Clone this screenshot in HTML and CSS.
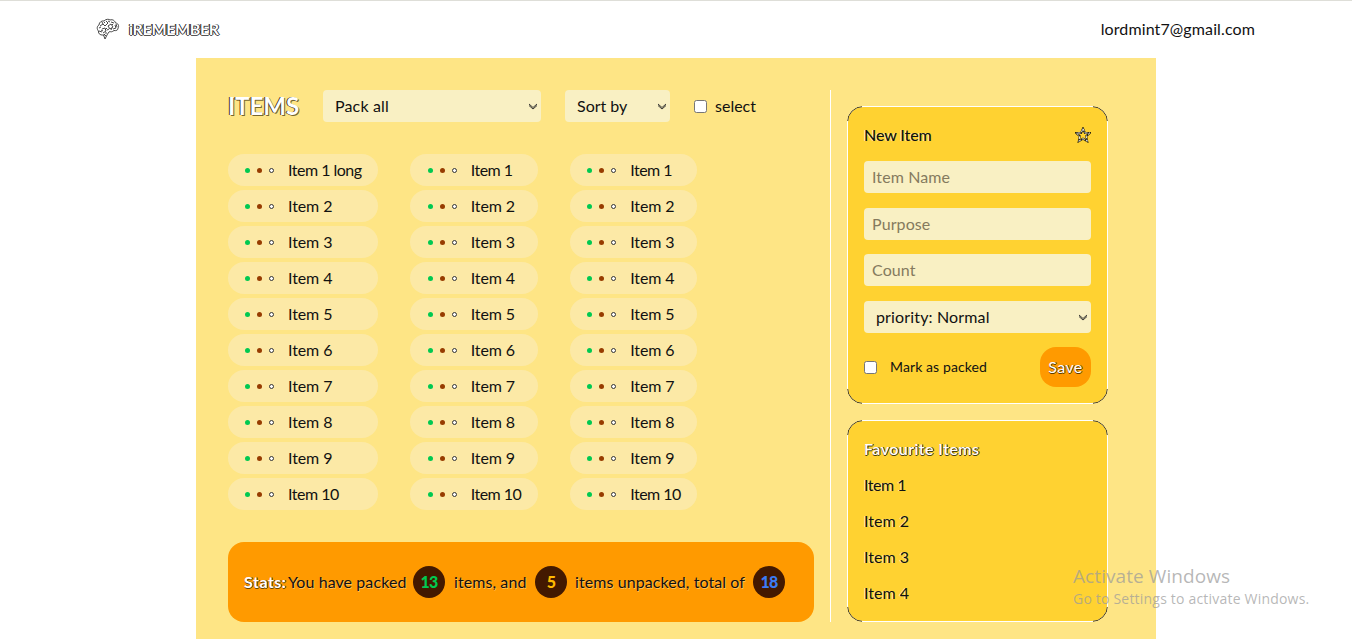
FILE: index.html
```html
<!DOCTYPE html>
<html lang="en">
<head>
<meta charset="utf-8">
<title>iRemember</title>
<link rel="stylesheet" href="styles.css">
</head>
<body>
<header class="topbar">
  <div class="brand">
    <svg class="brain" viewBox="0 0 24 22" fill="none" stroke="#333" stroke-width=".9">
      <path d="M9 16.500C5 18 2 16 2.500 13C.5 11 1 8 3 7C3 4 6 2.500 8 3C10 .8 13 1 14 2C17 1 19 3 19.500 5C22 5 23.500 8 22 10C22.500 12 20 13 18 12.500C16 14 15 14 14 13.500C12 14 12 16 11 17L9 21L7.500 17"/>
      <path d="M4 8L7 6L9 8L12 5L10 3M6 11L9 10L10 13L7 15M3 13L6 14M12 8L15 6L17 9L14 11L12 8M15 4L18 5M19 7L20 10L17 11M11 12L13 11M9 15L11 15M6 4L7 6M3 10L5 9M9 5L8 4M12 3L14 4M17 7L16 6M5 12L7 13M9 12L11 10M8 16L10 18M20 6L21 9M15 12L16 10"/>
    </svg>
    <span class="brand-name">iREMEMBER</span>
  </div>
  <span class="email">lordmint7@gmail.com</span>
</header>
<main class="board">
  <section class="left">
    <div class="tools">
      <h1 class="title">ITEMS</h1>
      <div class="select pack"><span>Pack all</span><svg class="chev" viewBox="0 0 10 7"><path d="M1 1L5 4.500L9 1M1 2.500L5 6L9 2.500"/></svg></div>
      <div class="select sort"><span>Sort by</span><svg class="chev" viewBox="0 0 10 7"><path d="M1 1L5 4.500L9 1M1 2.500L5 6L9 2.500"/></svg></div>
      <label class="check"><input type="checkbox" class="box"><span>select</span></label>
    </div>
    <div class="lists" id="lists"></div>
    <div class="stats">
      <b class="stats-label">Stats:</b><span class="s1">You have packed</span><span class="num green">13</span><span class="s2">items, and</span><span class="num amber">5</span><span class="s3">items unpacked, total of</span><span class="num blue">18</span>
    </div>
  </section>
  <div class="divider"></div>
  <aside class="right">
    <form class="card form">
      <div class="card-head"><span class="new">New Item</span>
        <svg class="star" viewBox="0 0 16 16"><path class="star-dark" d="M8 1.500L9.900 6H14.700L11.200 9.200L12.200 14.200L8 11.600L3.800 14.200L4.800 9.200L1.300 6H6.100Z"/><path class="star-light" d="M8 1.500L9.900 6H14.700L11.200 9.200L12.200 14.200L8 11.600L3.800 14.200L4.800 9.200L1.300 6H6.100Z"/></svg>
      </div>
      <input class="field" placeholder="Item Name">
      <input class="field" placeholder="Purpose">
      <input class="field" placeholder="Count">
      <div class="select priority"><span>priority: Normal</span><svg class="chev" viewBox="0 0 10 7"><path d="M1 1L5 4.500L9 1M1 2.500L5 6L9 2.500"/></svg></div>
      <div class="actions">
        <label class="check mark"><input type="checkbox" class="box"><span>Mark as packed</span></label>
        <button type="button" class="save">Save</button>
      </div>
    </form>
    <section class="card favs">
      <h2 class="fav-title">Favourite Items</h2>
      <span class="one">Item 1</span><span>Item 2</span><span>Item 3</span><span>Item 4</span>
    </section>
  </aside>
</main>
<div class="watermark"><div class="wm-title">Activate Windows</div><div class="wm-text">Go to Settings to activate Windows.</div></div>
<script src="script.js"></script>
</body>
</html>
```
FILE: styles.css
```css
* { box-sizing: border-box; }
body {
  margin: 0;
  height: 639px;
  overflow: hidden;
  background: #fff;
  color: #111;
  font: 16px/24px Lato, "Open Sans", sans-serif;
}
.topbar {
  height: 58px;
  border-top: 1px solid #deded8;
  padding: 0 97px 1px 96px;
  display: flex;
  justify-content: space-between;
  align-items: center;
}
.brand { display: flex; align-items: center; gap: 9px; }
.brain { width: 24px; height: 22px; }
.brand-name { color: #fff; font-weight: 700; letter-spacing: -.35px; text-shadow: -1px 0 #2c2018, 1px 0 #1d2d3b, 0 1px #555; }
.email { letter-spacing: .12px; }
.board {
  width: 960px;
  height: 581px;
  margin: 0 auto;
  padding: 32px 48px 17px 32px;
  background: #fee585;
  display: flex;
  gap: 16px;
}
.left { width: 586px; }
.tools { display: flex; height: 32px; align-items: center; }
.title {
  width: 95px;
  margin: 0;
  font-size: 24px;
  line-height: 32px;
  font-weight: 700;
  color: #fff;
  text-shadow: -1px 0 #3d3012, 1px 1px #77672f;
}
.select {
  height: 32px;
  padding: 0 3px 0 12px;
  border-radius: 4px;
  background: #f9f0c3;
  display: flex;
  align-items: center;
  justify-content: space-between;
}
.pack { width: 218px; margin-right: 24px; letter-spacing: .15px; }
.sort { width: 105px; margin-right: 24px; }
.chev { width: 10px; height: 7px; fill: none; stroke: #222; stroke-width: .9; }
.check { display: flex; align-items: center; gap: 8px; }
.box {
  appearance: none;
  width: 13px;
  height: 13px;
  margin: 0;
  border: 1px solid #767676;
  border-radius: 2.5px;
  background: #fff;
}
.lists { display: flex; gap: 32px; margin-top: 32px; }
.column { display: flex; flex-direction: column; gap: 4px; width: 127.500px; }
.column.wide { width: 150px; }
.pill {
  height: 32px;
  padding-left: 17px;
  border-radius: 16px;
  background: #fce9a6;
  display: flex;
  align-items: center;
  white-space: nowrap;
  letter-spacing: -.1px;
}
.column:not(.wide) .pill { padding-left: 17.700px; }
.pill.one, .pill.ten, .one { letter-spacing: -.5px; }
.dot { width: 5px; height: 5px; border-radius: 50%; margin-right: 7px; }
.dot-green { background: #00c951; }
.dot-red { background: #973c00; }
.dot-white { background: #fff; border: 1px solid #333; margin-right: 14px; }
.stats {
  height: 80px;
  margin-top: 32px;
  padding-left: 16px;
  border-radius: 16px;
  background: #ff9a00;
  display: flex;
  align-items: center;
  white-space: nowrap;
  letter-spacing: .08px;
  text-shadow: 1px 1px rgba(255, 235, 200, .45);
}
.stats-label { width: 44px; color: #fff; letter-spacing: .5px; text-shadow: 1px 0 #4b3000, 0 1px #6b4500; }
.s1 { width: 125px; }
.s2 { width: 81px; }
.s3 { width: 178px; }
.num {
  width: 32px;
  height: 32px;
  border-radius: 50%;
  background: #431900;
  font-weight: 900;
  line-height: 32px;
  text-align: center;
  letter-spacing: -.8px;
  text-shadow: none;
}
.green { color: #00c951; margin-right: 9px; }
.amber { color: #ffb900; margin-right: 8px; }
.blue { color: #3b7cf5; }
.divider { width: 1px; background: #fff; }
.right { width: 261px; padding-top: 16px; display: flex; flex-direction: column; gap: 16px; }
.card {
  position: relative;
  border: 1px solid #fff;
  border-radius: 16px;
  background: #ffd231;
  padding: 16px;
  display: flex;
  flex-direction: column;
}
/* dark arcs drawn over the rounded corners only */
.card::before {
  content: "";
  position: absolute;
  inset: -1px;
  border: 1px solid #40340c;
  border-radius: 16px;
  pointer-events: none;
  --c: linear-gradient(#000 0 0);
  mask: var(--c) 0 0 / 15px 15px no-repeat, var(--c) 100% 0 / 15px 15px no-repeat,
    var(--c) 0 100% / 15px 15px no-repeat, var(--c) 100% 100% / 15px 15px no-repeat;
}
.form { height: 298px; }
.card-head { display: flex; justify-content: space-between; align-items: center; height: 24px; margin-bottom: 14px; }
.new { font-weight: 500; letter-spacing: -.1px; text-shadow: -1px 0 #fff2b0; }
.star { width: 16px; height: 16px; fill: none; }
.star-dark { stroke: #2c260c; stroke-width: 2; }
.star-light { stroke: #fff; stroke-width: .9; stroke-dasharray: 3 1.500; }
.field {
  width: 227px;
  height: 32px;
  flex: none;
  margin: 0 0 14.700px;
  padding: 0 8px 1px;
  border: 0;
  border-radius: 4px;
  background: #f9f0c3;
  font: inherit;
  letter-spacing: .1px;
}
.field::placeholder { color: #857a5e; opacity: 1; }
.priority { flex: none; margin-bottom: 14px; letter-spacing: .15px; }
.actions { display: flex; align-items: center; justify-content: space-between; height: 40px; }
.mark { gap: 13px; font-size: 14px; letter-spacing: .1px; }
.save {
  width: 51px;
  height: 40px;
  padding: 0;
  border: 0;
  border-radius: 16px;
  background: #ff9a00;
  color: #fff;
  font: inherit;
  letter-spacing: .4px;
  text-shadow: 1px 0 #5c3b00, 0 1px #5c3b00;
}
.favs { height: 202px; gap: 12px; text-shadow: -1px 0 #fff0a8; }
.fav-title { margin: 0; font-size: 16px; line-height: 24px; font-weight: 600; letter-spacing: .42px; color: #fff; text-shadow: 1px 0 #2e260a, 0 1px #4b3e10; }
.watermark { position: absolute; left: 1073px; top: 564px; color: rgba(155, 155, 155, .72); font-family: "Open Sans", sans-serif; white-space: nowrap; }
.wm-title { font-size: 19px; line-height: 24px; letter-spacing: .08px; }
.wm-text { font-size: 14px; line-height: 21px; letter-spacing: .2px; }
```
FILE: script.js
```js
const lists = document.getElementById("lists");
for (let c = 0; c < 3; c++) {
  const column = document.createElement("div");
  column.className = c === 0 ? "column wide" : "column";
  for (let i = 1; i <= 10; i++) {
    const pill = document.createElement("div");
    pill.className = "pill" + (i === 1 ? " one" : i === 10 ? " ten" : "");
    for (const color of ["green", "red", "white"]) {
      const dot = document.createElement("i");
      dot.className = "dot dot-" + color;
      pill.append(dot);
    }
    const name = document.createElement("span");
    name.textContent = "Item " + i + (c === 0 && i === 1 ? " long" : "");
    pill.append(name);
    column.append(pill);
  }
  lists.append(column);
}
```
